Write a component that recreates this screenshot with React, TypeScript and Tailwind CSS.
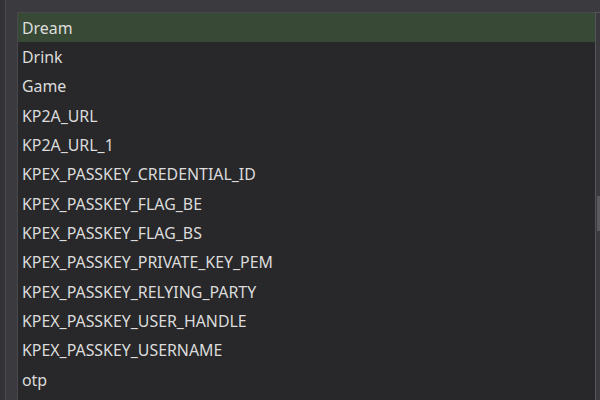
const items = [
  "Dream",
  "Drink",
  "Game",
  "KP2A_URL",
  "KP2A_URL_1",
  "KPEX_PASSKEY_CREDENTIAL_ID",
  "KPEX_PASSKEY_FLAG_BE",
  "KPEX_PASSKEY_FLAG_BS",
  "KPEX_PASSKEY_PRIVATE_KEY_PEM",
  "KPEX_PASSKEY_RELYING_PARTY",
  "KPEX_PASSKEY_USER_HANDLE",
  "KPEX_PASSKEY_USERNAME",
  "otp",
];

export default function App() {
  return (
    <div
      className="flex h-[400px] w-[600px] overflow-hidden bg-[#3b3a3e]"
      style={{ fontFamily: '"Noto Sans", "Open Sans", sans-serif' }}
    >
      <div className="w-[5px] shrink-0 bg-[#333236]" />
      <div className="w-px shrink-0 bg-[#4a494d]" />
      <div className="flex min-w-0 flex-1 flex-col pl-[11px] pt-[12px]">
        <div className="flex min-h-0 flex-1">
          <div className="min-w-0 flex-1 border-l border-t border-[#49484c] bg-[#28282a]">
            {items.map((it, i) => (
              <div
                key={it}
                className={
                  i === 0
                    ? "flex h-[29.33px] items-center bg-[#384936] pl-[4px] pt-[2px] text-[15.9px] text-[#dedede]"
                    : "flex h-[29.33px] items-center pl-[4px] pt-[2px] text-[15.9px] text-[#dcdcdc]"
                }
              >
                {it}
              </div>
            ))}
          </div>
          <div className="relative w-[5px] shrink-0 border-l border-t border-[#55545a] bg-[#3a393d]">
            <div className="absolute left-[1px] top-[183px] h-[35px] w-[3px] bg-[#5a595e]" />
          </div>
        </div>
      </div>
    </div>
  );
}
